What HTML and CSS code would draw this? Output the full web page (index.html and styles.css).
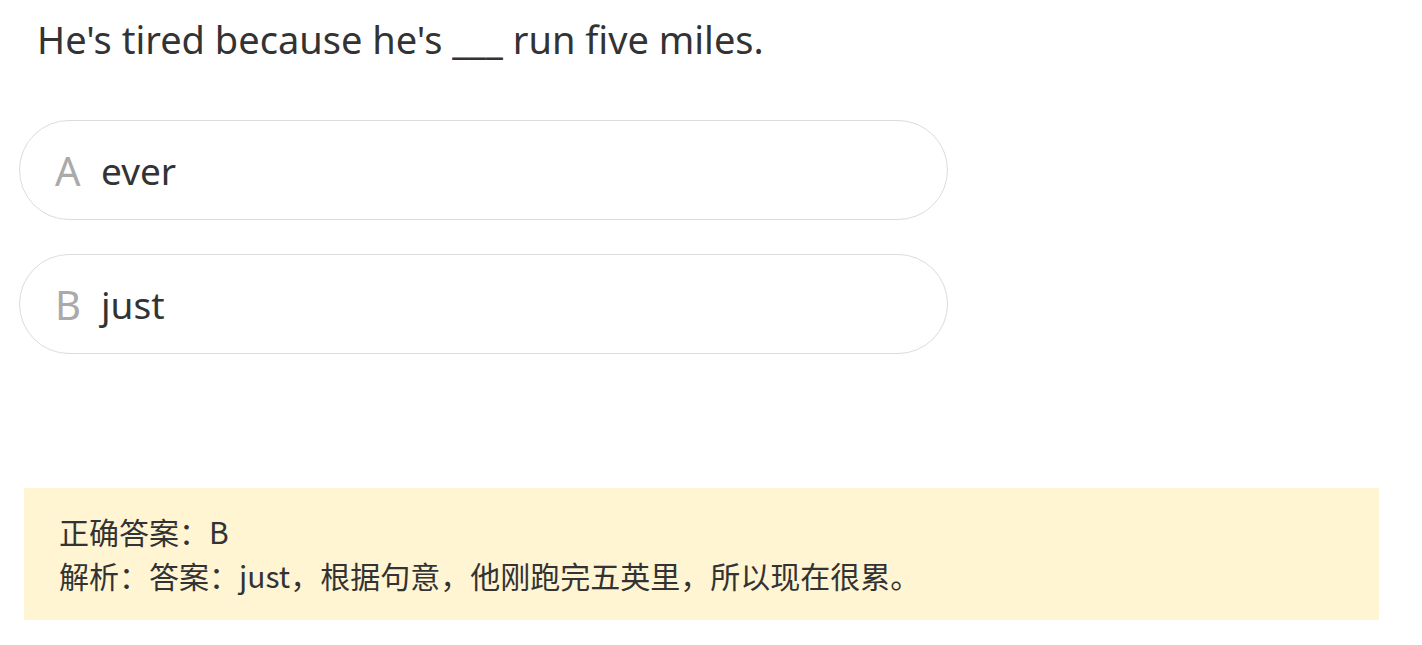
FILE: index.html
```html
<!DOCTYPE html>
<html lang="zh-CN">
<head>
<meta charset="utf-8">
<link rel="stylesheet" href="styles.css">
</head>
<body>
<div class="page">
  <div class="question">He's tired because he's ___ run five miles.</div>
  <div class="options">
    <div class="option"><span class="letter">A</span><span class="text">ever</span></div>
    <div class="option"><span class="letter">B</span><span class="text">just</span></div>
  </div>
  <div class="analysis">
    <div class="line">正确答案：B</div>
    <div class="line">解析：答案：just，根据句意，他刚跑完五英里，所以现在很累。</div>
  </div>
</div>
</body>
</html>
```
FILE: styles.css
```css
html, body {
  margin: 0;
  padding: 0;
  background: #fff;
}
body {
  font-family: "Noto Sans", "Noto Sans CJK SC", sans-serif;
  color: #333;
}
.page {
  padding: 15px 0 0 0;
}
.question {
  font-size: 38px;
  line-height: 48px;
  padding-left: 37px;
}
.options {
  display: flex;
  flex-direction: column;
  gap: 34px;
  margin-top: 57px;
  padding-left: 19px;
}
.option {
  width: 892px;
  height: 98px;
  border: 1px solid #dcdcdc;
  border-radius: 50px;
  display: flex;
  align-items: center;
  padding-left: 35px;
  box-sizing: content-box;
}
.letter {
  color: #aaa;
  font-size: 40px;
  width: 46px;
}
.text {
  font-size: 37px;
}
.analysis {
  margin: 134px 43px 0 24px;
  background: #fff5d3;
  padding: 21px 35px 23px;
  font-family: "Noto Sans CJK SC", sans-serif;
  font-size: 30px;
  line-height: 44px;
}
```
